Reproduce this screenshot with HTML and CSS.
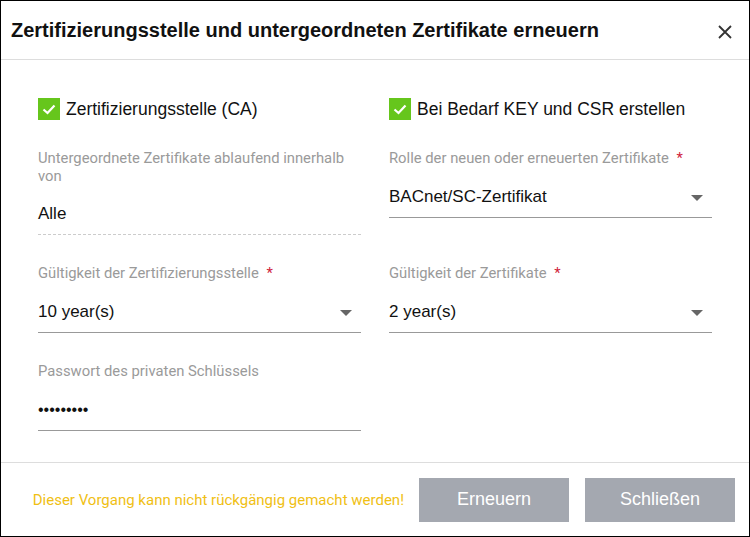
FILE: index.html
```html
<!DOCTYPE html>
<html lang="de">
<head>
  <meta charset="UTF-8">
  <meta name="viewport" content="width=device-width, initial-scale=1.0">
  <title>Zertifikate erneuern</title>
  <link rel="stylesheet" href="styles.css">
</head>
<body>
  <div class="dialog">
    <div class="dialog-header">
      <h1>Zertifizierungsstelle und untergeordneten Zertifikate erneuern</h1>
      <button class="close-btn" title="Schließen">
        <svg width="16" height="16" viewBox="0 0 16 16">
          <path d="M2 2 L14 14 M14 2 L2 14" stroke="#333" stroke-width="1.8" fill="none"/>
        </svg>
      </button>
    </div>

    <div class="dialog-body">
      <label class="check">
        <span class="box">
          <svg width="22" height="22" viewBox="0 0 22 22">
            <path d="M5.5 11.5 L9.5 15 L16.5 7.5" stroke="#fff" stroke-width="2.2" fill="none"/>
          </svg>
        </span>
        Zertifizierungsstelle (CA)
      </label>
      <label class="check">
        <span class="box">
          <svg width="22" height="22" viewBox="0 0 22 22">
            <path d="M5.5 11.5 L9.5 15 L16.5 7.5" stroke="#fff" stroke-width="2.2" fill="none"/>
          </svg>
        </span>
        Bei Bedarf KEY und CSR erstellen
      </label>

      <div class="field">
        <div class="field-label">Untergeordnete Zertifikate ablaufend innerhalb von</div>
        <div class="field-value readonly">Alle</div>
      </div>
      <div class="field">
        <div class="field-label">Rolle der neuen oder erneuerten Zertifikate <span class="req">*</span></div>
        <div class="field-value select">BACnet/SC-Zertifikat</div>
      </div>

      <div class="field">
        <div class="field-label">Gültigkeit der Zertifizierungsstelle <span class="req">*</span></div>
        <div class="field-value select">10 year(s)</div>
      </div>
      <div class="field">
        <div class="field-label">Gültigkeit der Zertifikate <span class="req">*</span></div>
        <div class="field-value select">2 year(s)</div>
      </div>

      <div class="field">
        <div class="field-label">Passwort des privaten Schlüssels</div>
        <div class="field-value password">&bull;&bull;&bull;&bull;&bull;&bull;&bull;&bull;&bull;</div>
      </div>
    </div>

    <div class="dialog-footer">
      <span class="warning">Dieser Vorgang kann nicht rückgängig gemacht werden!</span>
      <button class="btn">Erneuern</button>
      <button class="btn">Schließen</button>
    </div>
  </div>
</body>
</html>
```

FILE: styles.css
```css
* {
  box-sizing: border-box;
}
body {
  margin: 0;
  font-family: "Liberation Sans", Arial, sans-serif;
  background: #fff;
  color: #111;
}
.dialog {
  width: 750px;
  height: 537px;
  border: 1px solid #000;
  display: flex;
  flex-direction: column;
}
.dialog-header {
  height: 59px;
  border-bottom: 1px solid #ddd;
  display: flex;
  align-items: center;
  justify-content: space-between;
  padding: 0 10px 0 10px;
}
h1 {
  margin: 0;
  font-size: 20px;
  font-weight: bold;
  color: #111;
}
.close-btn {
  background: none;
  border: none;
  padding: 0;
  width: 28px;
  height: 28px;
  display: flex;
  align-items: center;
  justify-content: center;
  margin-top: 4px;
  cursor: pointer;
}
.dialog-body {
  flex: 1;
  padding: 38px 37px 0 37px;
  display: grid;
  grid-template-columns: 1fr 1fr;
  column-gap: 28px;
  row-gap: 29px;
  align-content: start;
}
.check {
  display: flex;
  align-items: center;
  gap: 6px;
  font-size: 17.5px;
  height: 22px;
  color: #111;
}
.box {
  width: 22px;
  height: 22px;
  background: #66c61c;
  display: block;
}
.box svg {
  display: block;
}
.field-label {
  font-family: Roboto, sans-serif;
  font-size: 14.8px;
  line-height: 18px;
  color: #9a9a9a;
  margin-bottom: 9px;
}
.req {
  color: #d0243c;
  margin-left: 4px;
}
.field-value {
  height: 42px;
  display: flex;
  align-items: center;
  font-size: 17px;
  color: #111;
  border-bottom: 1px solid #999;
}
.field-value.readonly {
  border-bottom: 1px dashed #ccc;
  height: 41px;
}
.field-value.select {
  position: relative;
}
.field-value.select::after {
  content: "";
  position: absolute;
  right: 9px;
  top: 19px;
  border-left: 6px solid transparent;
  border-right: 6px solid transparent;
  border-top: 6px solid #666;
}
.field-value.password {
  font-size: 16px;
}
.dialog-footer {
  height: 74px;
  border-top: 1px solid #ddd;
  display: flex;
  align-items: center;
  justify-content: flex-end;
  padding: 0 14px 0 20px;
  gap: 16px;
}
.warning {
  font-family: Roboto, sans-serif;
  font-size: 15px;
  color: #f0c014;
  margin-right: -1px;
}
.btn {
  width: 150px;
  height: 44px;
  background: #a4a8b0;
  border: none;
  color: #fff;
  font-family: "Liberation Sans", Arial, sans-serif;
  font-size: 18px;
  cursor: pointer;
}
.btn:hover {
  background: #959aa3;
}
```
